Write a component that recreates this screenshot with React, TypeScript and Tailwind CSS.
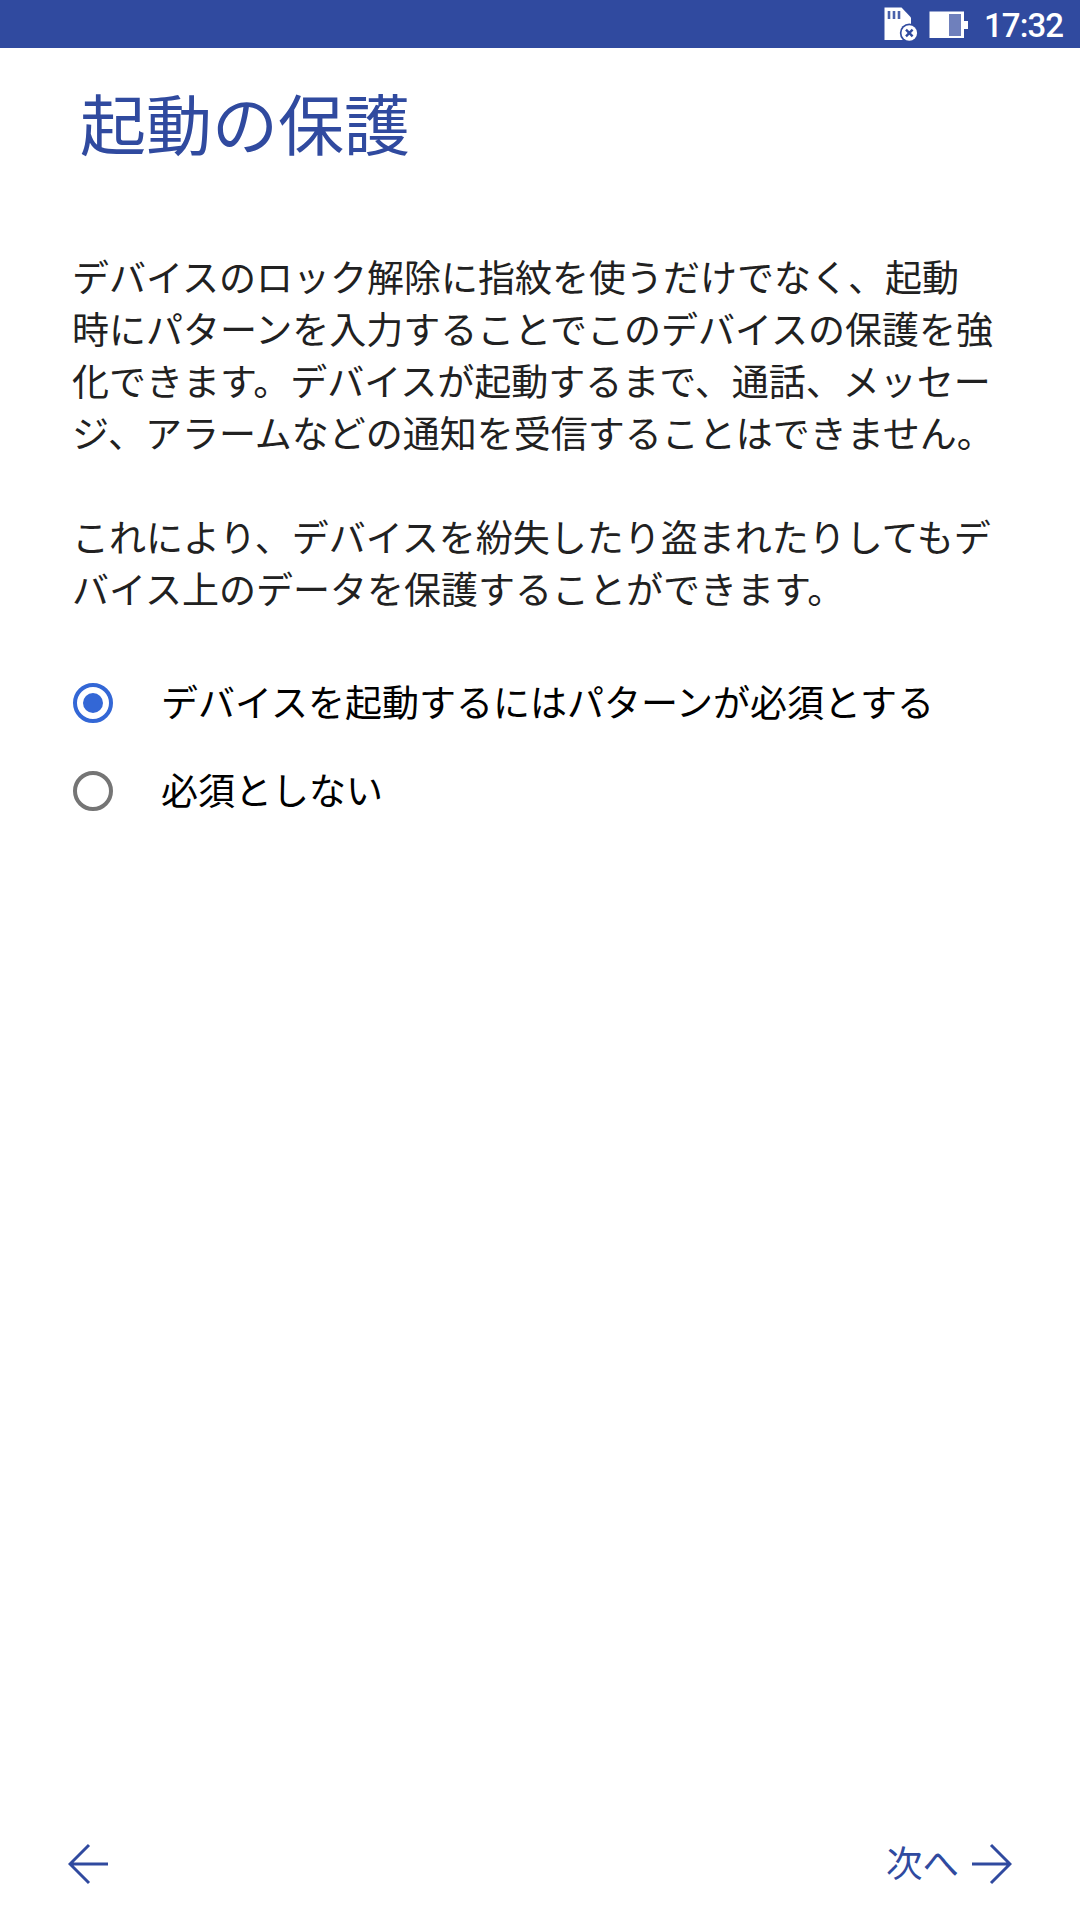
export default function App() {
  return (
    <div className="flex h-[1920px] w-[1080px] flex-col overflow-hidden bg-white font-['Noto_Sans_CJK_JP',sans-serif] text-[#212121]">
      <header className="flex h-12 items-center bg-[#304a9f] pl-[884px] text-white">
        <svg className="shrink-0" width="34" height="48" viewBox="0 0 34 48">
          <path d="M0.5 7.5H17.5L27 17.5V40H0.5Z" fill="#fff" />
          <path d="M5 11V19M10 11V19M15 11V19" stroke="#4a61ab" strokeWidth="2.6" />
          <circle cx="25.3" cy="33" r="9.5" fill="#304a9f" />
          <circle cx="25.3" cy="33" r="7.8" fill="#fff" />
          <path d="M22 29.7L28.6 36.3M28.6 29.7L22 36.3" stroke="#304a9f" strokeWidth="2.4" />
        </svg>
        <svg className="ml-[11px] shrink-0" width="40" height="48" viewBox="0 0 40 48">
          <path d="M0.5 11.5H35V21H39V29H35V38H0.5Z" fill="#fff" />
          <path d="M20 14H32V36H20Z" fill="#6f80bc" />
        </svg>
        <span className="ml-[15px] mt-[3px] font-['Roboto',sans-serif] text-[33px] font-medium leading-none tracking-[-0.9px]">17:32</span>
      </header>
      <h1 className="mt-[25px] pl-[80px] text-[66px] leading-[96px] text-[#304a9f]">起動の保護</h1>
      <div className="mt-[81px] pl-[72px] text-[37px] leading-[52px]">
        <p>デバイスのロック解除に指紋を使うだけでなく、起動<br />時にパターンを入力することでこのデバイスの保護を強<br />化できます。デバイスが起動するまで、通話、メッセー<br />ジ、アラームなどの通知を受信することはできません。</p>
        <p className="mt-[52px]">これにより、デバイスを紛失したり盗まれたりしてもデ<br />バイス上のデータを保護することができます。</p>
      </div>
      <main className="mt-[45px] pl-[72px] text-[37px] text-black">
        <label className="flex h-[88px] items-center gap-[47px]"><svg width="42" height="42" viewBox="0 0 42 42"><circle cx="21" cy="21" r="18" fill="none" stroke="#3367d6" strokeWidth="4" /><circle cx="21" cy="21" r="10" fill="#3367d6" /></svg><span className="-mt-0.5">デバイスを起動するにはパターンが必須とする</span></label>
        <label className="flex h-[88px] items-center gap-[47px]"><svg width="42" height="42" viewBox="0 0 42 42"><circle cx="21" cy="21" r="18" fill="none" stroke="#757575" strokeWidth="4" /></svg><span className="-mt-0.5">必須としない</span></label>
      </main>
      <footer className="mt-auto flex h-28 items-center justify-between pl-[68px] pr-[68px] text-[36.5px] text-[#304a9f]">
        <svg width="41" height="42" viewBox="0 0 41 42" fill="none" stroke="currentColor" strokeWidth="3"><path d="M40 21H2M21 2L2 21L21 40" /></svg>
        <div className="flex items-center gap-3"><span className="-mt-1">次へ</span><svg width="41" height="42" viewBox="0 0 41 42" fill="none" stroke="currentColor" strokeWidth="3"><path d="M1 21H39M20 2L39 21L20 40" /></svg></div>
      </footer>
    </div>
  );
}
